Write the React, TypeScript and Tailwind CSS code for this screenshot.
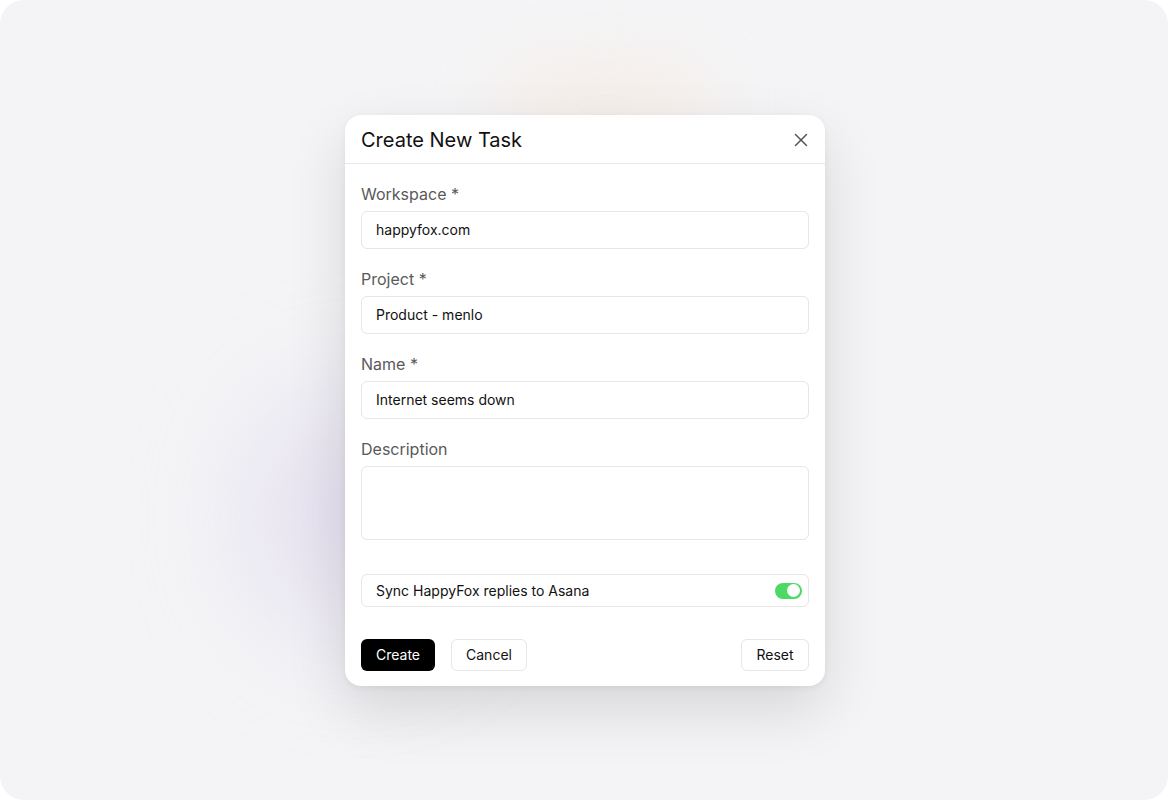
import { X } from "lucide-react";

/* ── Field ──────────────────────────────────────────────── */
function Field({ label, value }: { label: string; value: string }) {
  return (
    <div className="flex flex-col">
      <label className="mb-[5px] text-base leading-6 text-[#5a5a5a]">{label}</label>
      <div className="flex h-[38px] items-center rounded-md border border-[#e6e6e6] px-[14px] text-sm text-[#111]">
        {value}
      </div>
    </div>
  );
}

/* ── Main ───────────────────────────────────────────────── */
export default function App() {
  return (
    <div
      className="h-[800px] w-[1168px] bg-white"
      style={{ fontFamily: "Inter, 'Noto Sans', sans-serif" }}
    >
      <div className="flex h-full w-full items-center justify-center overflow-hidden rounded-[24px] bg-[#f4f4f6]">
        <div className="relative ml-[2px] mt-[1px]">
          {/* soft glows */}
          <div className="pointer-events-none absolute left-[-90px] top-[280px] h-[240px] w-[200px] rounded-full bg-[#d9d0ea] opacity-60 blur-[60px]" />
          <div className="pointer-events-none absolute left-[150px] top-[-50px] h-[80px] w-[220px] rounded-full bg-[#f6e8dc] opacity-60 blur-[40px]" />

          <div className="relative flex w-[480px] flex-col rounded-2xl bg-white shadow-[0_24px_60px_rgba(0,0,0,0.12),0_2px_6px_rgba(0,0,0,0.06)]">
            {/* Header */}
            <div className="flex h-[49px] items-center justify-between border-b border-[#e8e8e8] pl-4 pr-[13px] pt-[2px]">
              <h2 className="text-xl font-normal text-[#111]">Create New Task</h2>
              <X size={22} strokeWidth={1.6} className="text-[#555]" />
            </div>

            {/* Body */}
            <div className="flex flex-col px-4 pb-[15px] pt-[18px]">
              <div className="flex flex-col gap-[18px]">
                <Field label="Workspace *" value="happyfox.com" />
                <Field label="Project *" value="Product - menlo" />
                <Field label="Name *" value="Internet seems down" />
                <div className="flex flex-col">
                  <label className="mb-[5px] text-base leading-6 text-[#5a5a5a]">Description</label>
                  <div className="h-[74px] rounded-md border border-[#e6e6e6]" />
                </div>
              </div>

              <div className="mt-[34px] flex h-[33px] items-center justify-between rounded-md border border-[#e6e6e6] pl-[14px] pr-[6px]">
                <span className="text-sm text-[#111]">Sync HappyFox replies to Asana</span>
                <div className="flex h-[16px] w-[27px] items-center justify-end rounded-full bg-[#4cd964] p-[2px]">
                  <div className="h-[13px] w-[13px] rounded-full bg-white" />
                </div>
              </div>

              <div className="mt-[32px] flex items-center">
                <button className="h-[32px] w-[74px] rounded-md bg-black text-sm text-white">Create</button>
                <button className="ml-4 h-[32px] w-[76px] rounded-md border border-[#e6e6e6] text-sm text-[#111]">Cancel</button>
                <button className="ml-auto h-[32px] w-[68px] rounded-md border border-[#e6e6e6] text-sm text-[#111]">Reset</button>
              </div>
            </div>
          </div>
        </div>
      </div>
    </div>
  );
}
